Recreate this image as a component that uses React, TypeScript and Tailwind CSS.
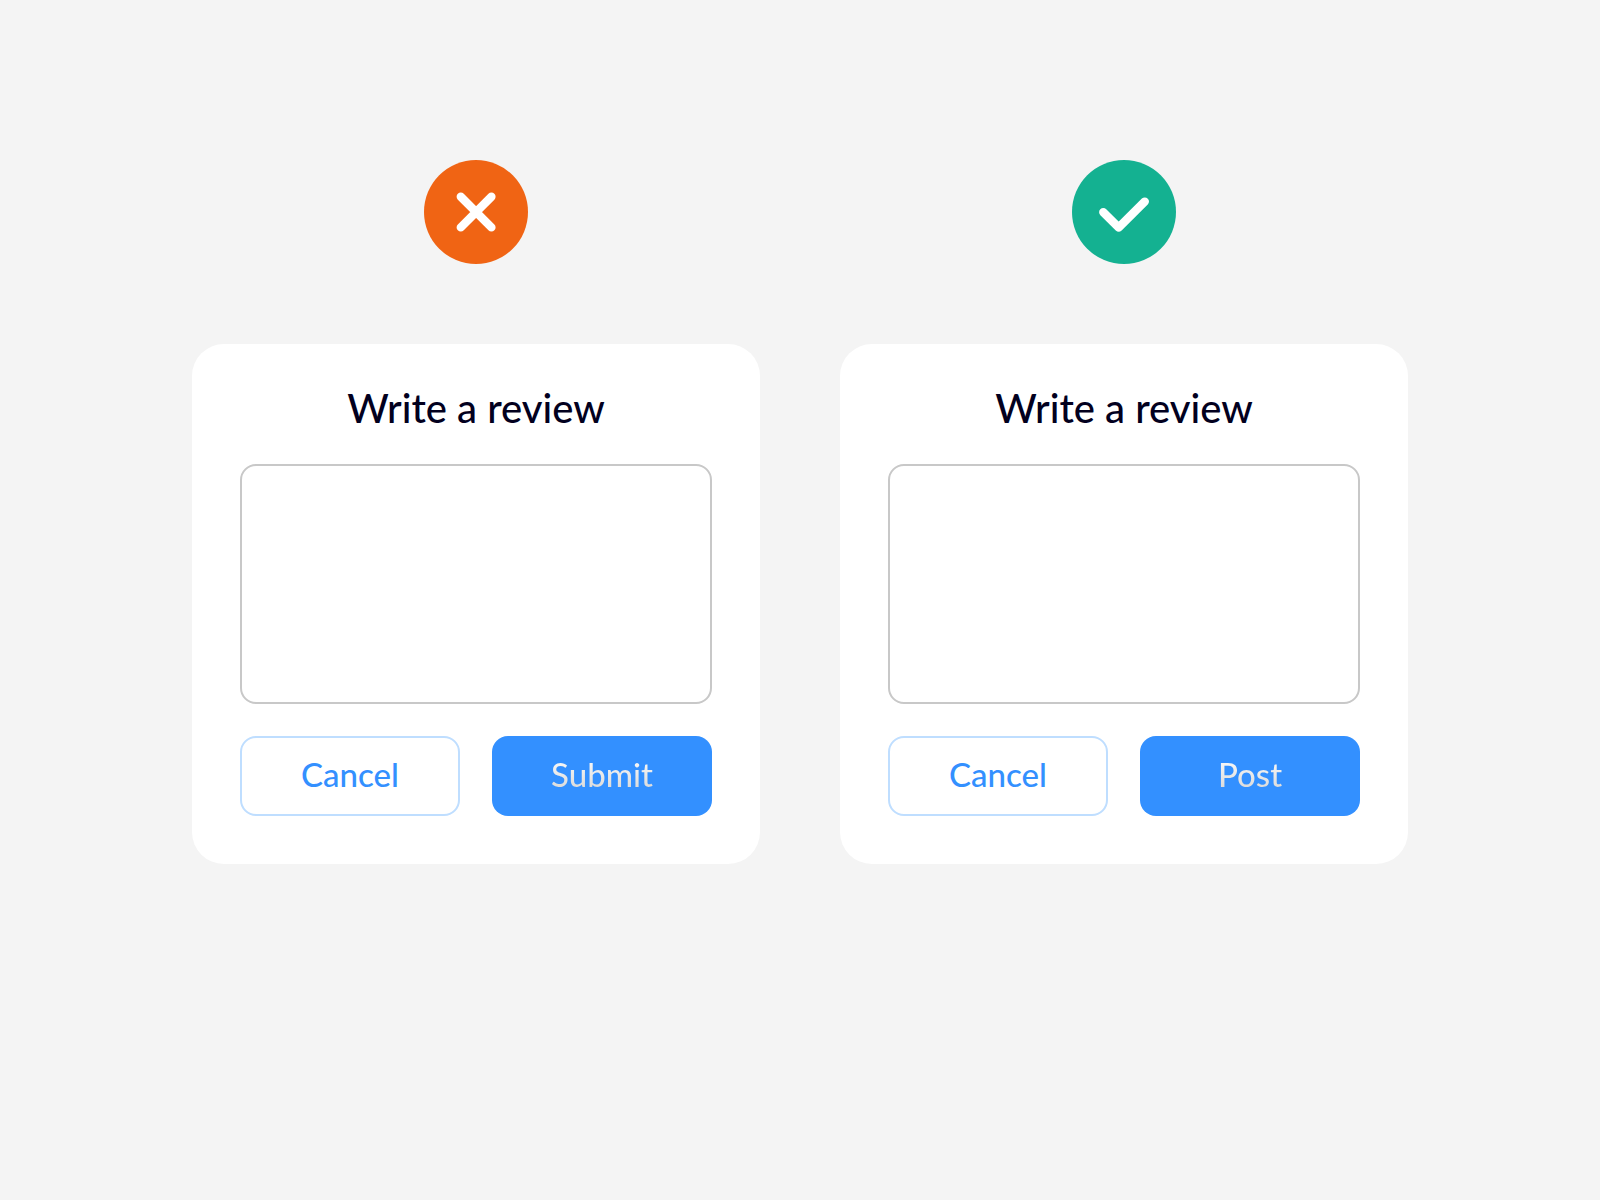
import { useId, useState } from "react";

type Props = {
  variant: "bad" | "good";
  action: string;
};

function StatusIcon({ variant }: { variant: Props["variant"] }) {
  return (
    <svg
      viewBox="0 0 104 104"
      className="size-26"
      fill="none"
      stroke="white"
      strokeWidth="8.4"
      strokeLinecap="round"
      strokeLinejoin="round"
      aria-hidden="true"
    >
      {variant === "bad" ? (
        <>
          <circle cx="52" cy="52" r="52" fill="#f06414" stroke="none" />
          <path d="M36.8 36.8 67.4 67.4M67.4 36.8 36.8 67.4" />
        </>
      ) : (
        <>
          <circle cx="52" cy="52" r="52" fill="#14b191" stroke="none" />
          <path d="M31.3 52.2 46.7 67.4 72.8 41.6" />
        </>
      )}
    </svg>
  );
}

function ReviewCard({ variant, action }: Props) {
  const id = useId();
  const [review, setReview] = useState("");

  return (
    <section className="flex flex-1 flex-col items-center gap-20">
      <StatusIcon variant={variant} />

      <form
        onSubmit={(e) => e.preventDefault()}
        className="flex w-full flex-col rounded-[32px] bg-white px-12 pt-10 pb-12"
      >
        <label
          htmlFor={id}
          className="mb-8 text-center text-[40px] leading-12 font-medium text-[#02001e]"
        >
          Write a review
        </label>

        <textarea
          id={id}
          value={review}
          onChange={(e) => setReview(e.target.value)}
          className="mb-8 h-60 w-full resize-none rounded-2xl border-2 border-[#c8c8c8] p-4 text-2xl focus:outline-none"
        />

        {/* form actions */}
        <div className="grid grid-cols-2 gap-8 text-[33px] leading-10 font-medium">
          <button
            type="button"
            onClick={() => setReview("")}
            className="h-20 rounded-2xl border-2 border-[#bfdeff] pb-1 text-[#3390ff]"
          >
            Cancel
          </button>
          <button type="submit" className="h-20 rounded-2xl bg-[#3390ff] pb-1">
            <span className="bg-linear-to-b from-white to-[#d5d5d5] bg-clip-text text-transparent">
              {action}
            </span>
          </button>
        </div>
      </form>
    </section>
  );
}

function App() {
  return (
    <main className="flex min-h-screen gap-20 bg-[#f4f4f4] px-48 pt-40 font-['Lato',sans-serif]">
      <ReviewCard variant="bad" action="Submit" />
      <ReviewCard variant="good" action="Post" />
    </main>
  );
}

export default App;
